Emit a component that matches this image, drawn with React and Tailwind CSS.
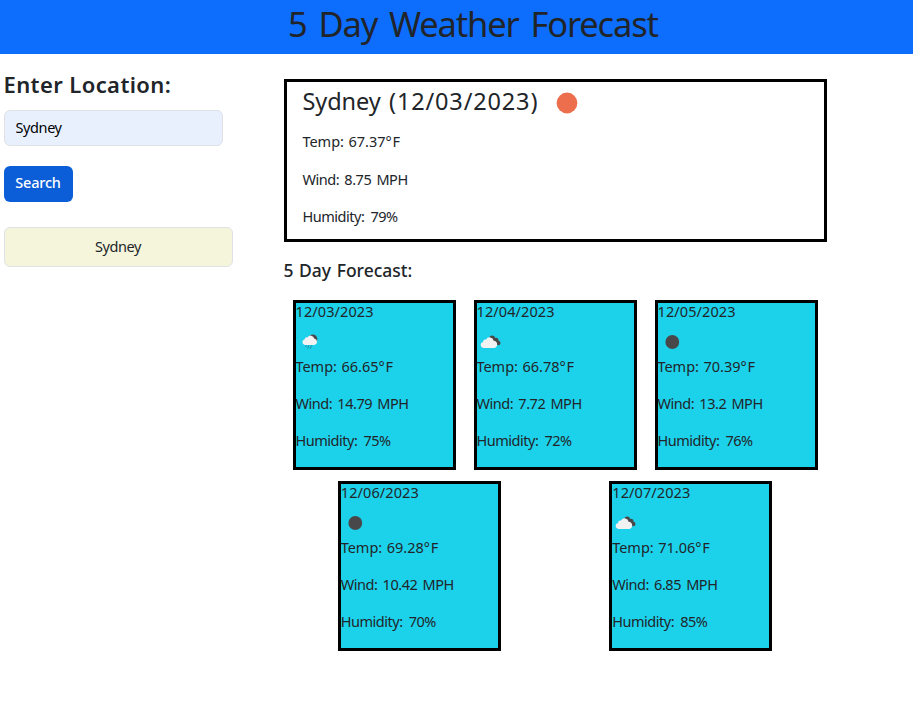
const days = [
  { date: '12/03/2023', icon: 'rain', temp: '66.65', wind: '14.79', humidity: '75' },
  { date: '12/04/2023', icon: 'clouds', temp: '66.78', wind: '7.72', humidity: '72' },
  { date: '12/05/2023', icon: 'dark', temp: '70.39', wind: '13.2', humidity: '76' },
  { date: '12/06/2023', icon: 'dark', temp: '69.28', wind: '10.42', humidity: '70' },
  { date: '12/07/2023', icon: 'clouds', temp: '71.06', wind: '6.85', humidity: '85' },
];

function WeatherIcon({ type }) {
  return (
    <svg className="-ml-[2px] block h-[37px] w-[37px]" viewBox="0 0 37 37">
      {type === 'dark' && <circle cx="16.3" cy="19" r="6.9" fill="#48484a" />}
      {type === 'clouds' && (
        <>
          <g fill="#48484a">
            <circle cx="17.2" cy="15.2" r="2.8" />
            <circle cx="20.9" cy="17.4" r="2.6" />
            <circle cx="23.3" cy="20" r="2.2" />
            <path d="M15 16.5 22 22 24 21.5 21 15.5Z" />
          </g>
          <path
            d="M8.4 25a3.1 3.1 0 0 1-.4-6.1 2.6 2.6 0 0 1 3.1-2.4 4 4 0 0 1 7.5 1.2 3.7 3.7 0 0 1 .7 7.3Z"
            fill="#f2f2f2"
          />
        </>
      )}
      {type === 'rain' && (
        <>
          <circle cx="18.8" cy="15.9" r="4.5" fill="#48484a" />
          <path
            d="M10.9 21.9a2.8 2.8 0 0 1-.4-5.5 2.5 2.5 0 0 1 2.9-2 3.7 3.7 0 0 1 6.8 1.2 3.2 3.2 0 0 1 .3 6.3Z"
            fill="#f2f2f2"
          />
          <path
            d="m12.2 22.6-.6 1.1m3.2-1.1-.7 1.1m3.3-1.1-.7 1.1m-2.4.7-.6 1.1m3.2-1.1-.6 1.1"
            stroke="#27626d"
            strokeWidth="1"
            fill="none"
          />
        </>
      )}
    </svg>
  );
}

function Readings({ temp, wind, humidity }) {
  return (
    <>
      <p className="mb-[15px] tracking-[-0.05px] [word-spacing:1px]">
        Temp: {temp}
        <span className="tracking-[1px]">°</span>F
      </p>
      <p className="mb-[15px] tracking-[-0.47px] [word-spacing:1.9px]">Wind: {wind} MPH</p>
      <p className="tracking-[-0.48px] [word-spacing:2.8px]">Humidity: {humidity}%</p>
    </>
  );
}

function DayCard({ day }) {
  return (
    <article className="h-[170px] w-[163px] border-[3px] border-black bg-[#1cd2eb] leading-[22px] text-[#212529]">
      <h3 className="h-[20px] leading-[16px] tracking-[0.1px]">{day.date}</h3>
      <div className="h-[32px]">
        <WeatherIcon type={day.icon} />
      </div>
      <Readings temp={day.temp} wind={day.wind} humidity={day.humidity} />
    </article>
  );
}

export default function App() {
  return (
    <div className="min-h-[713px] bg-white font-['Noto_Sans','Open_Sans',sans-serif] text-[14.5px] text-[#212529]">
      <header className="h-[54px] bg-[#0d6efd] pl-[33px] text-center">
        <h1 className="text-[34.5px] leading-[48px] tracking-[-1.15px] [word-spacing:4px]">
          5 Day Weather Forecast
        </h1>
      </header>
      <div className="flex">
        <aside className="w-[283.5px] pl-[3.5px] pt-[18px]">
          <h2 className="text-[22px] font-semibold leading-[24px] tracking-[0.4px]">Enter Location:</h2>
          <input
            className="mt-[14px] block h-[36px] w-[219px] rounded-[6px] border border-[#dee2e6] bg-[#e8f0fe] px-[11px] pb-[2px] tracking-[-0.4px] text-black outline-none"
            defaultValue="Sydney"
          />
          <button className="mt-[20px] block h-[36px] w-[69px] rounded-[6px] bg-[#0b5ed7] pb-[2px] font-medium tracking-[-0.2px] text-white">
            Search
          </button>
          <button className="mt-[25px] block h-[40px] w-[229px] rounded-[6px] border border-[#dee2e6] bg-[#f5f5dc] tracking-[-0.4px]">
            Sydney
          </button>
        </aside>
        <main className="w-[543px] pt-[25px]">
          <section className="h-[163px] border-[3px] border-black pl-[16px]">
            <div className="flex h-[38px] items-center">
              <h2 className="text-[23.5px] leading-[38px] tracking-[0.85px] [word-spacing:1.5px]">
                <span className="tracking-[-0.1px]">Sydney</span> (12/03/2023)
              </h2>
              <svg className="ml-[17.5px] mt-[4px] h-[22px] w-[22px]" viewBox="0 0 22 22">
                <circle cx="11" cy="11" r="10.4" fill="#ec6e4c" />
              </svg>
            </div>
            <div className="pt-[10px] leading-[22.6px]">
              <Readings temp="67.37" wind="8.75" humidity="79" />
            </div>
          </section>
          <h2 className="mt-[16px] text-[17.5px] font-medium leading-[24px] [word-spacing:1px]">
            5 Day Forecast:
          </h2>
          <div className="mt-[18px] flex flex-wrap justify-around gap-y-[11px]">
            {days.map((day) => (
              <DayCard key={day.date} day={day} />
            ))}
          </div>
        </main>
      </div>
    </div>
  );
}
